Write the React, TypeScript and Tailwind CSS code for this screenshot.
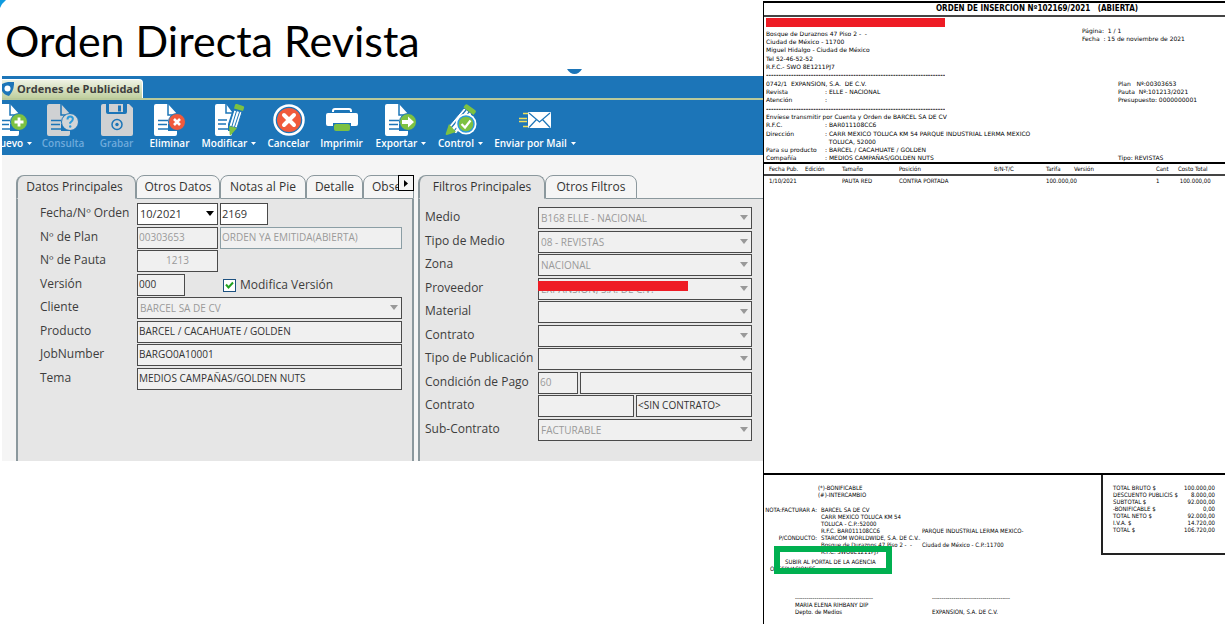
import React from 'react';

const GREEN = '#7dc142';
const BLUE = '#1c75b8';

const FORM_FONT = "font-['Open_Sans','Noto_Sans',sans-serif]";

/* ---------- toolbar icons ---------- */

const Page: React.FC<{ fill?: string }> = ({ fill = '#fff' }) => (
  <>
    <path d="M2 0h12l10 11v5H16v4h-2v7h9v3q0 2-2 2H2q-2 0-2-2V2q0-2 2-2z" fill={fill} />
    <path d="M14 0v11h9" fill="none" stroke={BLUE} strokeWidth="1.5" />
    <path d="M4 16.500h10M4 20.500h9M4 25h11" stroke={BLUE} strokeWidth="1.500" />
  </>
);

const NewIcon = () => (
  <svg width="32" height="32" viewBox="0 0 32 32" aria-hidden="true">
    <Page />
    <circle cx="23" cy="18" r="8.500" fill={GREEN} stroke={BLUE} />
    <path d="M23 13.500v9M18.500 18h9" stroke="#fff" strokeWidth="2.800" />
  </svg>
);

const QueryIcon = () => (
  <svg width="32" height="32" viewBox="0 0 32 32" aria-hidden="true">
    <Page fill="#cfd1d3" />
    <circle cx="23" cy="18" r="8.500" fill="#d3d5d7" stroke={BLUE} />
    <path d="M20.500 15.500q0-3 2.700-3t2.700 2.600q0 1.600-2.700 3.600v1" fill="none" stroke="#2b9bdb" strokeWidth="2" />
    <circle cx="23.200" cy="22.500" r="1.200" fill="#2b9bdb" />
  </svg>
);

const SaveIcon = () => (
  <svg width="32" height="32" viewBox="0 0 32 32" aria-hidden="true">
    <path d="M2 0h3v8q0 2 2 2h17q2 0 2-2V0h2l4 4v26q0 2-2 2H2q-2 0-2-2V2q0-2 2-2z" fill="#cfd1d3" />
    <path d="M8 0h14v8H8z" fill="#cfd1d3" />
    <path d="M17 1.500h3v6h-3z" fill={BLUE} />
    <circle cx="16" cy="20.500" r="5" fill="none" stroke={BLUE} strokeWidth="1.500" />
    <circle cx="16" cy="20.500" r="1.700" fill={BLUE} />
  </svg>
);

const DeleteIcon = () => (
  <svg width="32" height="32" viewBox="0 0 32 32" aria-hidden="true">
    <Page />
    <circle cx="23" cy="18" r="8.500" fill="#f05a3c" stroke={BLUE} />
    <path d="M20 15l6 6M26 15l-6 6" stroke="#fff" strokeWidth="2.600" />
  </svg>
);

const EditIcon = () => (
  <svg width="32" height="32" viewBox="0 0 32 32" aria-hidden="true">
    <path d="M4 0h9l6 8-4 12v7h4v3q0 2-2 2H4q-2 0-2-2V2q0-2 2-2z" fill="#fff" />
    <path d="M13 0v9h6" fill="none" stroke={BLUE} strokeWidth="1.500" />
    <path d="M5 16h9M5 20h8M5 25h10" stroke={BLUE} strokeWidth="1.500" />
    <path d="M21 6l8 2-5 16-8-2z" fill="#fff" stroke={BLUE} />
    <path d="M23.500 7l-4.500 15M26.500 8l-5 15" stroke={BLUE} strokeWidth="1" />
    <path d="M22 1q.5-1.500 2-1l6 2q1.500.5 1 2l-1 3-9-2.500zM16 22l8 2-6 7q-1 .8-1.300-.5z" fill={GREEN} />
  </svg>
);

const CancelIcon = () => (
  <svg width="32" height="32" viewBox="0 0 32 32" aria-hidden="true">
    <circle cx="16" cy="16" r="14.500" fill={BLUE} stroke="#fff" strokeWidth="2.500" />
    <circle cx="16" cy="16" r="12" fill="#f05a3c" />
    <path d="M11 11l10 10M21 11L11 21" stroke="#fff" strokeWidth="4" strokeLinecap="round" />
  </svg>
);

const PrintIcon = () => (
  <svg width="32" height="32" viewBox="0 0 32 32" aria-hidden="true">
    <path d="M7 8V7q0-2 2-2h14q2 0 2 2v1" fill="none" stroke="#fff" strokeWidth="2" />
    <path d="M2 9h28q2 0 2 2v9q0 2-2 2h-5v-3H7v3H2q-2 0-2-2v-9q0-2 2-2z" fill="#fff" />
    <rect x="8" y="20" width="16" height="7" rx="2" fill={GREEN} />
  </svg>
);

const ExportIcon = () => (
  <svg width="32" height="32" viewBox="0 0 32 32" aria-hidden="true">
    <Page />
    <circle cx="23" cy="18" r="8.500" fill={GREEN} stroke={BLUE} />
    <path d="M17 16h6v-3.500l6 5.500-6 5.500V20h-6z" fill="#fff" />
  </svg>
);

const ControlIcon = () => (
  <svg width="32" height="32" viewBox="0 0 32 32" aria-hidden="true">
    <path d="M19 4l8 6-16 20-8-7z" fill="#fff" stroke={BLUE} />
    <path d="M21 6L6 24M24 8L9 27" stroke={BLUE} strokeWidth="1.200" />
    <path d="M20 1q1.500-1.500 3 0l7 5q1.500 1.200.5 2.500l-2 2.500-10-7.500zM4 20l7 8-9 3q-1.800.3-1.200-1.500z" fill={GREEN} />
    <circle cx="21" cy="20" r="10.500" fill="#fff" />
    <circle cx="21" cy="20" r="8" fill={GREEN} stroke="#2b9bdb" strokeWidth="1.500" />
    <path d="M16.500 20l3.500 3.500 5.500-7" fill="none" stroke="#fff" strokeWidth="2.200" />
  </svg>
);

const MailIcon = () => (
  <svg width="32" height="32" viewBox="0 0 32 32" aria-hidden="true">
    <path d="M4 9.500h5M0 14.500h8M0 17.500h8M4 22.500h5" stroke="#f1e05a" strokeWidth="1.600" />
    <rect x="9" y="8" width="23" height="16" rx="1" fill="#fff" />
    <path d="M10 9l10.500 9L31 9M10 23.500l7.500-8M31 23.500l-7.500-8" fill="none" stroke={BLUE} strokeWidth="1.200" />
  </svg>
);

interface Tool {
  label: string;
  icon: React.FC;
  width: string;
  menu?: boolean;
  disabled?: boolean;
}

const tools: Tool[] = [
  { label: 'Nuevo', icon: NewIcon, width: '-ml-[14px] w-12', menu: true },
  { label: 'Consulta', icon: QueryIcon, width: 'w-[54px]', disabled: true },
  { label: 'Grabar', icon: SaveIcon, width: 'w-[53px]', disabled: true },
  { label: 'Eliminar', icon: DeleteIcon, width: 'w-[53px]' },
  { label: 'Modificar', icon: EditIcon, width: 'w-[66px]', menu: true },
  { label: 'Cancelar', icon: CancelIcon, width: 'w-[53px]' },
  { label: 'Imprimir', icon: PrintIcon, width: 'w-[53px]' },
  { label: 'Exportar', icon: ExportIcon, width: 'w-[66px]', menu: true },
  { label: 'Control', icon: ControlIcon, width: 'w-[53px]', menu: true },
  { label: 'Enviar por Mail', icon: MailIcon, width: 'w-24', menu: true },
];

const Toolbar = () => (
  <div className="flex h-[55px] overflow-hidden bg-[#1c75b8] pt-1">
    {tools.map(({ label, icon: Icon, width, menu, disabled }) => (
      <button
        key={label}
        disabled={disabled}
        className={`flex shrink-0 flex-col items-center ${width} ${disabled ? 'text-[#6fabdc]' : 'text-white'}`}
      >
        <Icon />
        <span className="flex items-center gap-1 text-[10px] leading-[14px] font-semibold whitespace-nowrap">
          {label}
          {menu && (
            <svg width="5" height="3" viewBox="0 0 5 3" aria-hidden="true">
              <path d="M0 0h5L2.500 3z" fill="#fff" />
            </svg>
          )}
        </span>
      </button>
    ))}
  </div>
);

/* ---------- form pieces ---------- */

const Tab: React.FC<{ children: React.ReactNode; active?: boolean; width: string }> = ({ children, active, width }) => (
  <button
    role="tab"
    aria-selected={!!active}
    className={`h-6 shrink-0 overflow-hidden rounded-t-lg border border-[#8b989d] text-xs whitespace-nowrap text-[#333] ${width} ${
      active ? 'border-b-[#e6e6e6] border-l-2 bg-[#e6e6e6]' : 'bg-[#f5f5f5]'
    }`}
  >
    {children}
  </button>
);

const Row: React.FC<{ label: string; htmlFor: string; labelWidth: string; children: React.ReactNode }> = ({
  label,
  htmlFor,
  labelWidth,
  children,
}) => (
  <div className="flex items-start odd:h-6 even:h-[23px]">
    <label htmlFor={htmlFor} className={`shrink-0 text-xs leading-5 whitespace-nowrap text-[#3d3d3d] ${labelWidth}`}>
      {label}
    </label>
    <div className="flex min-w-0 flex-1 gap-[2px]">{children}</div>
  </div>
);

interface FieldProps {
  id: string;
  value?: string;
  className?: string;
  muted?: boolean;
  label?: string;
}

const Field: React.FC<FieldProps> = ({ id, value = '', className = 'w-full', muted, label }) => (
  <input
    id={id}
    aria-label={label}
    defaultValue={value}
    readOnly={muted}
    className={`h-[22px] min-w-0 border px-px pb-[2px] text-[10px] outline-none ${
      muted ? 'text-[#9a9a9a]' : 'text-[#333]'
    } ${className.includes('bg-') ? '' : 'bg-[#f0f0f0]'} ${className.includes('border-[') ? '' : 'border-[#4a4a4a]'} ${className}`}
  />
);

const Combo: React.FC<FieldProps & { active?: boolean }> = ({ id, value = '', className = 'w-full', active }) => (
  <div className={`relative ${className}`}>
    <select
      id={id}
      disabled={!active}
      className={`block h-[22px] w-full appearance-none border border-[#4a4a4a] px-[2px] opacity-100 ${
        active ? 'bg-white text-[11px] text-[#333]' : 'bg-[#f0f0f0] text-[10px] text-[#9a9a9a]'
      }`}
    >
      <option>{value}</option>
    </select>
    <svg
      width="8"
      height="5"
      viewBox="0 0 8 5"
      className="pointer-events-none absolute top-2 right-1"
      aria-hidden="true"
    >
      <path d="M0 0h8L4 5z" fill={active ? '#000' : '#999'} />
    </svg>
  </div>
);

const MainData = () => (
  <section className="flex w-[398px] min-w-0 shrink-0 flex-col">
    <div role="tablist" className="relative flex overflow-hidden">
      <Tab active width="w-[120px] pr-1">Datos Principales</Tab>
      <Tab width="w-[84px]">Otros Datos</Tab>
      <Tab width="w-[86px]">Notas al Pie</Tab>
      <Tab width="w-[57px]">Detalle</Tab>
      <Tab width="w-[51px] pl-2 text-left">Obser</Tab>
      <button
        aria-label="Siguiente"
        className="absolute top-0 right-0 flex h-4 w-4 items-center justify-center border border-black bg-[#f5f5f5]"
      >
        <svg width="4" height="7" viewBox="0 0 4 7" aria-hidden="true">
          <path d="M0 0l4 3.500L0 7z" fill="#000" />
        </svg>
      </button>
    </div>
    <div className="flex-1 border-r-2 border-l-2 border-[#8b989d] bg-[#e6e6e6] pt-1 pr-[10px] pl-[22px]">
      <Row label="Fecha/Nº Orden" htmlFor="fecha" labelWidth="w-[97px]">
        <Combo id="fecha" value="10/2021" className="w-[81px]" active />
        <Field id="orden" value="2169" className="w-12 bg-white text-[11px]" label="Nº Orden" />
      </Row>
      <Row label="Nº de Plan" htmlFor="plan" labelWidth="w-[97px]">
        <Field id="plan" value="00303653" className="w-[81px]" muted />
        <Field id="estado" value="ORDEN YA EMITIDA(ABIERTA)" className="flex-1 border-[#8b9ea5]" muted label="Estado" />
      </Row>
      <Row label="Nº de Pauta" htmlFor="pauta" labelWidth="w-[97px]">
        <Field id="pauta" value="1213" className="w-[81px] text-center" muted />
      </Row>
      <Row label="Versión" htmlFor="version" labelWidth="w-[97px]">
        <Field id="version" value="000" className="w-12" />
        <label className="ml-9 flex items-center gap-1 text-xs text-[#3d3d3d]">
          <span className="relative flex h-[13px] w-[13px]">
            <input type="checkbox" defaultChecked className="h-[13px] w-[13px] appearance-none border border-[#1c5180] bg-white" />
            <svg width="13" height="13" viewBox="0 0 13 13" className="pointer-events-none absolute inset-0" aria-hidden="true">
              <path d="M3 5.500l2.500 3L10 3.500" fill="none" stroke="#21a121" strokeWidth="2" />
            </svg>
          </span>
          Modifica Versión
        </label>
      </Row>
      <Row label="Cliente" htmlFor="cliente" labelWidth="w-[97px]">
        <Combo id="cliente" value="BARCEL SA DE CV" />
      </Row>
      <Row label="Producto" htmlFor="producto" labelWidth="w-[97px]">
        <Field id="producto" value="BARCEL / CACAHUATE / GOLDEN" />
      </Row>
      <Row label="JobNumber" htmlFor="job" labelWidth="w-[97px]">
        <Field id="job" value="BARGO0A10001" />
      </Row>
      <Row label="Tema" htmlFor="tema" labelWidth="w-[97px]">
        <Field id="tema" value="MEDIOS CAMPAÑAS/GOLDEN NUTS" />
      </Row>
    </div>
  </section>
);

const Filters = () => (
  <section className="flex min-w-0 flex-1 flex-col">
    <div role="tablist" className="flex">
      <Tab active width="w-[127px]">Filtros Principales</Tab>
      <Tab width="w-[92px]">Otros Filtros</Tab>
      <div className="flex-1 border-b border-[#8b989d]" />
    </div>
    <div className="flex-1 border-l-2 border-[#8b989d] bg-[#e6e6e6] pt-2 pr-[11px] pb-[19px] pl-[5px]">
      <Row label="Medio" htmlFor="medio" labelWidth="w-[113px]">
        <Combo id="medio" value="B168 ELLE - NACIONAL" />
      </Row>
      <Row label="Tipo de Medio" htmlFor="tipo-medio" labelWidth="w-[113px]">
        <Combo id="tipo-medio" value="08 - REVISTAS" />
      </Row>
      <Row label="Zona" htmlFor="zona" labelWidth="w-[113px]">
        <Combo id="zona" value="NACIONAL" />
      </Row>
      <Row label="Proveedor" htmlFor="proveedor" labelWidth="w-[113px]">
        <div className="relative w-full">
          <Combo id="proveedor" value="EXPANSION, S.A. DE C.V." />
          <div className="absolute top-[3px] left-0 h-[10px] w-[150px] bg-[#ee1c25]" />
        </div>
      </Row>
      <Row label="Material" htmlFor="material" labelWidth="w-[113px]">
        <Combo id="material" />
      </Row>
      <Row label="Contrato" htmlFor="contrato" labelWidth="w-[113px]">
        <Combo id="contrato" />
      </Row>
      <Row label="Tipo de Publicación" htmlFor="tipo-pub" labelWidth="w-[113px]">
        <Combo id="tipo-pub" />
      </Row>
      <Row label="Condición de Pago" htmlFor="pago" labelWidth="w-[113px]">
        <Field id="pago" value="60" className="w-10" muted />
        <Field id="pago-desc" className="flex-1" label="Descripción de pago" />
      </Row>
      <Row label="Contrato" htmlFor="contrato-num" labelWidth="w-[113px]">
        <Field id="contrato-num" className="w-24" />
        <Field id="contrato-desc" value="<SIN CONTRATO>" className="flex-1" label="Descripción de contrato" />
      </Row>
      <Row label="Sub-Contrato" htmlFor="sub" labelWidth="w-[113px]">
        <Combo id="sub" value="FACTURABLE" />
      </Row>
    </div>
  </section>
);

const OrdersWindow = () => (
  <div className={`ml-[2px] bg-[#f5f5f5] ${FORM_FONT}`}>
    <div className="flex h-6 items-end border-b-2 border-[#b9c99a] bg-[#1c75b8]">
      <h2 className="flex h-[19px] w-[141px] items-center gap-[3px] rounded-tr-sm border-t border-r border-white bg-linear-to-b from-[#eef2e4] to-[#c0cf9f] text-[11px] font-bold whitespace-nowrap text-[#3d3d3d]">
        <svg width="12" height="14" viewBox="0 0 12 14" className="shrink-0" aria-hidden="true">
          <path d="M0 2q6-3 12-2 .5 8-5 14Q2 13 0 9z" fill={BLUE} />
          <circle cx="5.500" cy="6.500" r="3" fill="#fff" />
        </svg>
        Ordenes de Publicidad
      </h2>
    </div>
    <Toolbar />
    <div className="flex gap-1 pt-5 pl-[14px]">
      <MainData />
      <Filters />
    </div>
  </div>
);

/* ---------- printed order ---------- */

const RULE = '-----------------------------------------------------------------------------------------';

const letterhead: [string, string?][][] = [
  [['Bosque de Duraznos 47 Piso 2 -  -'], ['Ciudad de México - 11700'], ['Miguel Hidalgo - Ciudad de México']],
  [['Tel 52-46-52-52'], ['R.F.C.- SWO 8E1211PJ7'], [RULE]],
  [['0742/1  EXPANSION, S.A.  DE C.V.'], ['Revista', ': ELLE - NACIONAL'], ['Atención', ':']],
  [[RULE], ['Envíese transmitir por Cuenta y Orden de BARCEL SA DE CV'], ['R.F.C.', ': BAR011108CC6']],
  [
    ['Dirección', ': CARR MEXICO TOLUCA KM 54 PARQUE INDUSTRIAL LERMA MEXICO'],
    ['', '  TOLUCA, 52000'],
    ['Para su producto', ': BARCEL / CACAHUATE / GOLDEN'],
    ['Compañía', ': MEDIOS CAMPAÑAS/GOLDEN NUTS'],
  ],
];

const columns = [
  { title: 'Fecha Pub.', value: '1/10/2021', width: 'w-[41px] pl-[5px]' },
  { title: 'Edición', value: '', width: 'w-[37px]' },
  { title: 'Tamaño', value: 'PAUTA RED', width: 'w-[57px]' },
  { title: 'Posición', value: 'CONTRA PORTADA', width: 'w-[95px]' },
  { title: 'B/N-T/C', value: '', width: 'w-[52px]' },
  { title: 'Tarifa', value: '100.000,00', width: 'w-[28px]' },
  { title: 'Versión', value: '', width: 'w-[82px]' },
  { title: 'Cant', value: '1', width: 'w-[22px]' },
  { title: 'Costo Total', value: ' 100.000,00', width: '' },
];

const billing: [string, string, string?][] = [
  ['NOTA:FACTURAR A:', 'BARCEL SA DE CV'],
  ['', 'CARR MEXICO TOLUCA KM 54'],
  ['', 'TOLUCA - C.P.:52000'],
  ['', 'R.F.C. BAR011108CC6', 'PARQUE INDUSTRIAL LERMA MEXICO-'],
  ['P/CONDUCTO:', 'STARCOM WORLDWIDE, S.A. DE C.V..'],
  ['', 'Bosque de Duraznos 47 Piso 2 -  -', 'Ciudad de México - C.P.:11700'],
  ['', 'R.F.C. SWO8E1211PJ7'],
];

const totals = [
  ['TOTAL BRUTO $', '100.000,00'],
  ['DESCUENTO PUBLICIS $', '8.000,00'],
  ['SUBTOTAL $', '92.000,00'],
  ['-BONIFICABLE $', '0,00'],
  ['TOTAL NETO $', '92.000,00'],
  ['I.V.A. $', '14.720,00'],
  ['TOTAL $', '106.720,00'],
];

const PrintedOrder = () => (
  <article className="mt-px flex min-w-0 flex-col overflow-hidden border-t-2 border-l border-black bg-white font-['DejaVu_Sans',sans-serif] text-[6px] leading-[8px] whitespace-pre text-black">
    <h2 className="border-b-2 border-[#444] pl-[85px] text-center font-['DejaVu_Sans_Condensed','DejaVu_Sans',sans-serif] text-[8px] leading-3 font-bold">
      ORDEN DE INSERCION Nº102169/2021   (ABIERTA)
    </h2>
    <div className="flex justify-between pl-[2px]">
      <div className="flex flex-col gap-px pt-px">
        <div className="mb-[2px] h-[9px] w-[179px] bg-[#ee1c25]" />
        {letterhead.map((group, i) => (
          <div key={i}>
            {group.map(([label, value], j) => (
              <div key={j} className="flex h-2">
                {value === undefined ? (
                  <span className={label === RULE ? 'w-[179px] overflow-hidden font-bold' : ''}>{label}</span>
                ) : (
                  <>
                    <span className="w-[59px]">{label}</span>
                    <span>{value}</span>
                  </>
                )}
              </div>
            ))}
          </div>
        ))}
      </div>
      <div className="flex w-[143px] shrink-0 flex-col pt-[10px]">
        <p>Página:  1 / 1</p>
        <p>Fecha  : 15 de noviembre de 2021</p>
        <div className="mt-[37px] pl-9">
          <p>Plan   Nº:00303653</p>
          <p>Pauta  Nº:101213/2021</p>
          <p>Presupuesto: 0000000001</p>
        </div>
        <p className="mt-auto pl-9">Tipo: REVISTAS</p>
      </div>
    </div>
    <div className="flex-1 font-['DejaVu_Sans_Condensed','DejaVu_Sans',sans-serif]">
      <table className="w-full table-fixed border-t-2 border-black text-left">
        <thead>
          <tr className="border-b-2 border-[#444]">
            {columns.map((c) => (
              <th key={c.title} className={`h-3 p-0 font-normal ${c.width}`}>{c.title}</th>
            ))}
          </tr>
        </thead>
        <tbody>
          <tr>
            {columns.map((c) => (
              <td key={c.title} className={`h-[11px] p-0 ${c.width}`}>{c.value}</td>
            ))}
          </tr>
        </tbody>
      </table>
    </div>
    <footer className="flex items-start justify-between border-t-2 border-black font-['DejaVu_Sans_Condensed','DejaVu_Sans',sans-serif] leading-[7px]">
      <div className="relative pt-[9px] pb-[9px]">
        <div className="pl-[54px]">
          <p>(*)-BONIFICABLE</p>
          <p>(#)-INTERCAMBIO</p>
        </div>
        <div className="mt-2">
          {billing.map(([label, value, extra], i) => (
            <div key={i} className="flex h-[7px]">
              <span className="w-[57px] shrink-0 pr-1 pl-px text-right">{label}</span>
              <span className="w-[101px] shrink-0">{value}</span>
              <span>{extra}</span>
            </div>
          ))}
        </div>
        <p className="mt-[3px] pl-[21px]">SUBIR AL PORTAL DE LA AGENCIA</p>
        <p className="pl-[6px]">OBSERVACIONES</p>
        <div className="mt-[22px] flex pl-[31px]">
          <div className="w-[137px]">
            <p>----------------------------------------</p>
            <p>MARIA ELENA RIHBANY DIP</p>
            <p>Depto. de Medios</p>
          </div>
          <div>
            <p>----------------------------------------</p>
            <p className="mt-[7px]">EXPANSION, S.A. DE C.V.</p>
          </div>
        </div>
        <div className="absolute top-[71px] left-[10px] h-7 w-[118px] border-[6px] border-[#00b050]" />
      </div>
      <table className="w-[124px] border-b-2 border-l-2 border-[#222]">
        <tbody>
          {totals.map(([label, value], i) => (
            <tr key={label}>
              <td className={`p-0 pl-[10px] ${i === 0 ? 'pt-[9px]' : ''} ${i === 6 ? 'pb-5' : ''}`}>{label}</td>
              <td className={`p-0 pr-[10px] text-right ${i === 0 ? 'pt-[9px]' : ''} ${i === 6 ? 'pb-5' : ''}`}>{value}</td>
            </tr>
          ))}
        </tbody>
      </table>
    </footer>
  </article>
);

export default function App() {
  return (
    <main className="grid min-h-screen grid-cols-[763fr_462fr] overflow-hidden bg-white">
      <div className="relative min-w-0">
        <svg width="12" height="12" viewBox="0 0 12 12" className="absolute top-0 left-0" aria-hidden="true">
          <path d="M0 0h6Q2 3 0 8z" fill="#0f9be0" />
        </svg>
        <svg width="16" height="5" viewBox="0 0 16 5" className="absolute top-[69px] left-[567px]" aria-hidden="true">
          <path d="M0 0h15q-3 5-7.500 5T0 0z" fill={BLUE} />
        </svg>
        <h1 className="h-19 pt-2 pl-[5px] font-['Lato',sans-serif] text-[43px] leading-[66px] whitespace-nowrap text-black">
          Orden Directa Revista
        </h1>
        <OrdersWindow />
      </div>
      <PrintedOrder />
    </main>
  );
}
